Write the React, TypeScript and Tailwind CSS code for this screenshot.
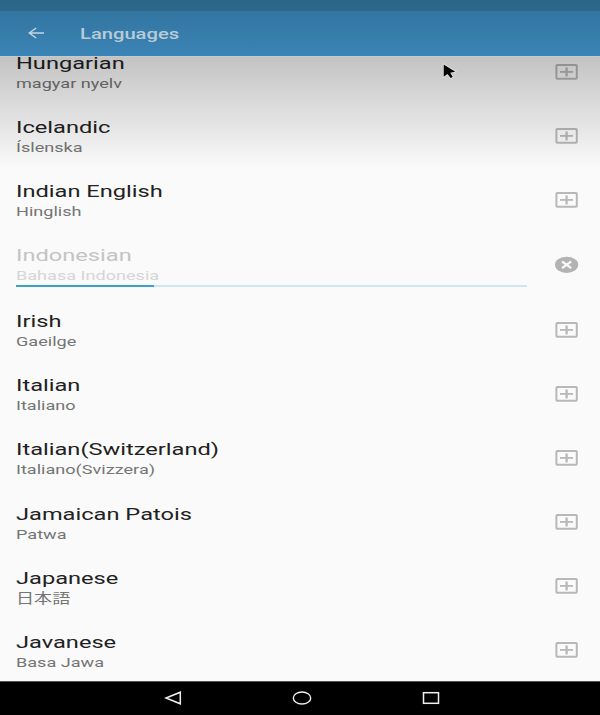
import React from "react";

type Language = { name: string; native: string; downloading?: boolean };

const languages: Language[] = [
  { name: "Hungarian", native: "magyar nyelv" },
  { name: "Icelandic", native: "Íslenska" },
  { name: "Indian English", native: "Hinglish" },
  { name: "Indonesian", native: "Bahasa Indonesia", downloading: true },
  { name: "Irish", native: "Gaeilge" },
  { name: "Italian", native: "Italiano" },
  { name: "Italian(Switzerland)", native: "Italiano(Svizzera)" },
  { name: "Jamaican Patois", native: "Patwa" },
  { name: "Japanese", native: "日本語" },
  { name: "Javanese", native: "Basa Jawa" },
];

function AddIcon() {
  return (
    <svg className="h-4 w-6" viewBox="0 0 24 16" fill="none" stroke="#b8b8b8">
      <rect x="1.4" y="1" width="20.4" height="13.8" rx="0.8" strokeWidth="2" />
      <path d="M5 7.9H18" strokeWidth="1.8" />
      <path d="M11.6 3.5V12.4" strokeWidth="2.3" />
    </svg>
  );
}

function CancelIcon() {
  return (
    <svg className="h-[17px] w-6" viewBox="0 0 24 17">
      <ellipse cx="11.6" cy="8.8" rx="11.6" ry="8.1" fill="#b3b3b3" />
      <path d="M7 5.5L16.2 12.1M16.2 5.5L7 12.1" stroke="#fafafa" strokeWidth="2.2" />
    </svg>
  );
}

function LanguageRow({ name, native, downloading }: Language) {
  return (
    <li className={`flex shrink-0 pl-4 ${downloading ? "h-[66px]" : "h-[64.1px]"}`}>
      <div className="w-[511px]">
        <div className={`h-5 origin-left scale-x-[1.39] text-[17px] leading-5 whitespace-nowrap ${downloading ? "text-[#c4c4c4]" : "text-[#212121]"}`}>
          {name}
        </div>
        <div className={`h-5 origin-left scale-x-[1.34] text-[13.5px] leading-5 whitespace-nowrap ${downloading ? "text-[#d6d6d6]" : "text-[#757575]"}`}>
          {native}
        </div>
        {downloading && (
          <div className="h-[2px] bg-[#cce7f1]">
            <div className="h-full w-[27%] bg-[#3ba3c4]" />
          </div>
        )}
      </div>
      <div className="ml-[27.5px] pt-[10.5px]">
        {downloading ? <CancelIcon /> : <AddIcon />}
      </div>
    </li>
  );
}

export default function App() {
  return (
    <div className="relative flex h-[715px] w-[600px] flex-col overflow-hidden bg-[#fafafa] font-['Roboto','Noto_Sans_CJK_JP',sans-serif]">
      <div className="h-[11px] shrink-0 bg-linear-to-b from-[#2b6489] to-[#2c678c]" />
      <header className="flex h-[45px] shrink-0 items-center bg-linear-to-b from-[#3375a1] to-[#3a84b5] pl-7">
        <svg className="mb-px h-3 w-4" viewBox="0 0 16 12" fill="none" stroke="#c3d3dd" strokeWidth="1.5">
          <path d="M16 6H1.5M8.2 1L1.3 6L8.2 11" />
        </svg>
        <h1 className="mt-0.5 ml-9 origin-left scale-x-[1.39] text-[14.5px] font-medium text-[#b9cbd7]">Languages</h1>
      </header>
      <main className="min-h-0 flex-1 overflow-hidden">
        <ul className="-mt-[3px] flex flex-col">
          {languages.map((l) => (
            <LanguageRow key={l.name} {...l} />
          ))}
        </ul>
      </main>
      <div className="pointer-events-none absolute inset-x-0 top-14 h-28 border-t border-[#6f8592]/40 bg-linear-to-b from-black/22 to-black/0" />
      <nav className="flex h-[34px] shrink-0 items-center border-t border-[#555] bg-black pl-[164px]">
        <svg className="mb-px h-4 w-[18px]" viewBox="0 0 18 16" fill="none" stroke="#f0f0f0" strokeWidth="1.5">
          <path d="M16.3 2.2V13.8L2 8Z" />
        </svg>
        <svg className="mb-px ml-[110px] h-4 w-5" viewBox="0 0 20 16" fill="none" stroke="#f0f0f0" strokeWidth="1.4">
          <ellipse cx="10" cy="8" rx="8.7" ry="6" />
        </svg>
        <svg className="mb-px ml-[110px] h-4 w-[18px]" viewBox="0 0 18 16" fill="none" stroke="#f0f0f0" strokeWidth="1.5">
          <rect x="1.5" y="2.7" width="15" height="10.6" />
        </svg>
      </nav>
      <svg className="absolute top-[62px] left-[442px] h-[19px] w-4" viewBox="0 0 16 19">
        <path d="M1.7 2.5V14.7L5.5 12.1L8.6 16L10.8 15L8.3 10.8L13.3 9.7Z" fill="#050505" stroke="#e9e9e9" strokeWidth="1.4" paintOrder="stroke" />
      </svg>
    </div>
  );
}
